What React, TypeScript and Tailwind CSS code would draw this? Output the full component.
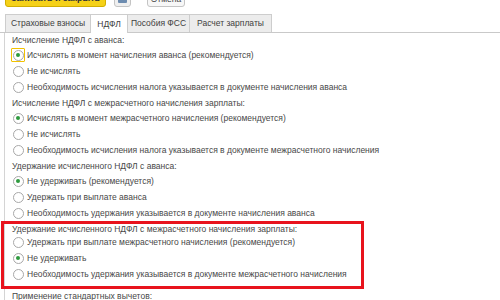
import React from "react";

function Radio({ checked, focused, label }: { checked?: boolean; focused?: boolean; label: string }) {
  return (
    <div className="flex items-center h-[16px]">
      <div className={"w-[14px] h-[14px] flex items-center justify-center ml-[6px] " + (focused ? "border border-[#f2c200] rounded-[1px]" : "border border-transparent")}>
        <div className="w-[11px] h-[11px] shrink-0 rounded-full border border-[#a8a8a8] bg-white flex items-center justify-center">
          {checked && <div className="w-[4px] h-[4px] rounded-full bg-[#2e9a3e]" />}
        </div>
      </div>
      <span className="ml-[2px] text-[#474747] whitespace-nowrap">{label}</span>
    </div>
  );
}

function Group({ title, items, checkedIndex, focusIndex, titleH = "h-[14px]" }: { title: string; items: string[]; checkedIndex: number; focusIndex?: number; titleH?: string }) {
  return (
    <div className="flex flex-col">
      <div className={titleH + " flex items-center pl-[7px] text-[#474747] whitespace-nowrap"}>{title}</div>
      {items.map((t, i) => (
        <Radio key={i} label={t} checked={i === checkedIndex} focused={i === focusIndex} />
      ))}
    </div>
  );
}

export default function App() {
  return (
    <div className="w-[500px] h-[300px] overflow-hidden bg-white text-[8.5px] leading-none" style={{ fontFamily: '"Liberation Sans", Arial, sans-serif' }}>
      {/* top buttons */}
      <div className="flex items-end h-[7px] overflow-visible">
        <div className="flex items-end ml-[5px] mt-[-15px]">
          <div className="w-[101px] h-[21px] rounded-[3px] bg-[#f5d118] border border-[#d2ae00] flex items-end justify-center pb-[3px] text-[#333] font-bold text-[9px]">Записать и закрыть</div>
          <div className="ml-[8px] w-[17px] h-[21px] rounded-[3px] bg-[#efefef] border border-[#c4c4c4] flex items-end justify-center pb-[3px]">
            <div className="w-[9px] h-[7px] bg-[#6d8cb0] rounded-[1px]" />
          </div>
          <div className="ml-[16px] w-[38px] h-[21px] rounded-[3px] bg-[#f7f7f7] border border-[#c4c4c4] flex items-end justify-center pb-[3px] text-[#444] text-[8.5px]">Отмена</div>
        </div>
      </div>
      {/* tabs */}
      <div className="mt-[7px] flex items-end h-[19px] border-b border-[#c9c9c9] pl-[5px] text-[8.5px]">
        <div className="w-[86px] h-[18px] flex items-center justify-center bg-[#ececec] border border-[#cdcdcd] border-b-0 text-[#404040]">Страховые взносы</div>
        <div className="w-[37px] h-[19px] mb-[-1px] flex items-center justify-center bg-white border border-[#cdcdcd] border-b-0 border-l-0 text-[#404040]">НДФЛ</div>
        <div className="w-[62px] h-[18px] flex items-center justify-center bg-[#ececec] border border-[#cdcdcd] border-b-0 border-l-0 text-[#404040]">Пособия ФСС</div>
        <div className="w-[82px] h-[18px] flex items-center justify-center bg-[#ececec] border border-[#cdcdcd] border-b-0 border-l-0 text-[#404040]">Расчет зарплаты</div>
      </div>
      {/* content */}
      <div className="ml-[4px] border-l border-[#d4d4d4] flex flex-col gap-[1px]">
        <Group
          title="Исчисление НДФЛ с аванса:"
          items={[
            "Исчислять в момент начисления аванса (рекомендуется)",
            "Не исчислять",
            "Необходимость исчисления налога указывается в документе начисления аванса",
          ]}
          checkedIndex={0}
          focusIndex={0}
        />
        <Group
          title="Исчисление НДФЛ с межрасчетного начисления зарплаты:"
          items={[
            "Исчислять в момент межрасчетного начисления (рекомендуется)",
            "Не исчислять",
            "Необходимость исчисления налога указывается в документе межрасчетного начисления",
          ]}
          checkedIndex={0}
        />
        <Group
          title="Удержание исчисленного НДФЛ с аванса:"
          items={[
            "Не удерживать (рекомендуется)",
            "Удержать при выплате аванса",
            "Необходимость удержания указывается в документе начисления аванса",
          ]}
          checkedIndex={0}
        />
        <div className="ml-[-4px] mt-[-1px] w-[363px] border-[3px] border-[#e8131d] pb-[4px] pl-[1px]">
          <Group
            title="Удержание исчисленного НДФЛ с межрасчетного начисления зарплаты:"
            titleH="h-[10px]"
            items={[
              "Удержать при выплате межрасчетного начисления (рекомендуется)",
              "Не удерживать",
              "Необходимость удержания указывается в документе межрасчетного начисления",
            ]}
            checkedIndex={1}
          />
        </div>
        <div className="h-[12px] flex items-center pl-[7px] text-[#474747] whitespace-nowrap">Применение стандартных вычетов:</div>
      </div>
    </div>
  );
}
